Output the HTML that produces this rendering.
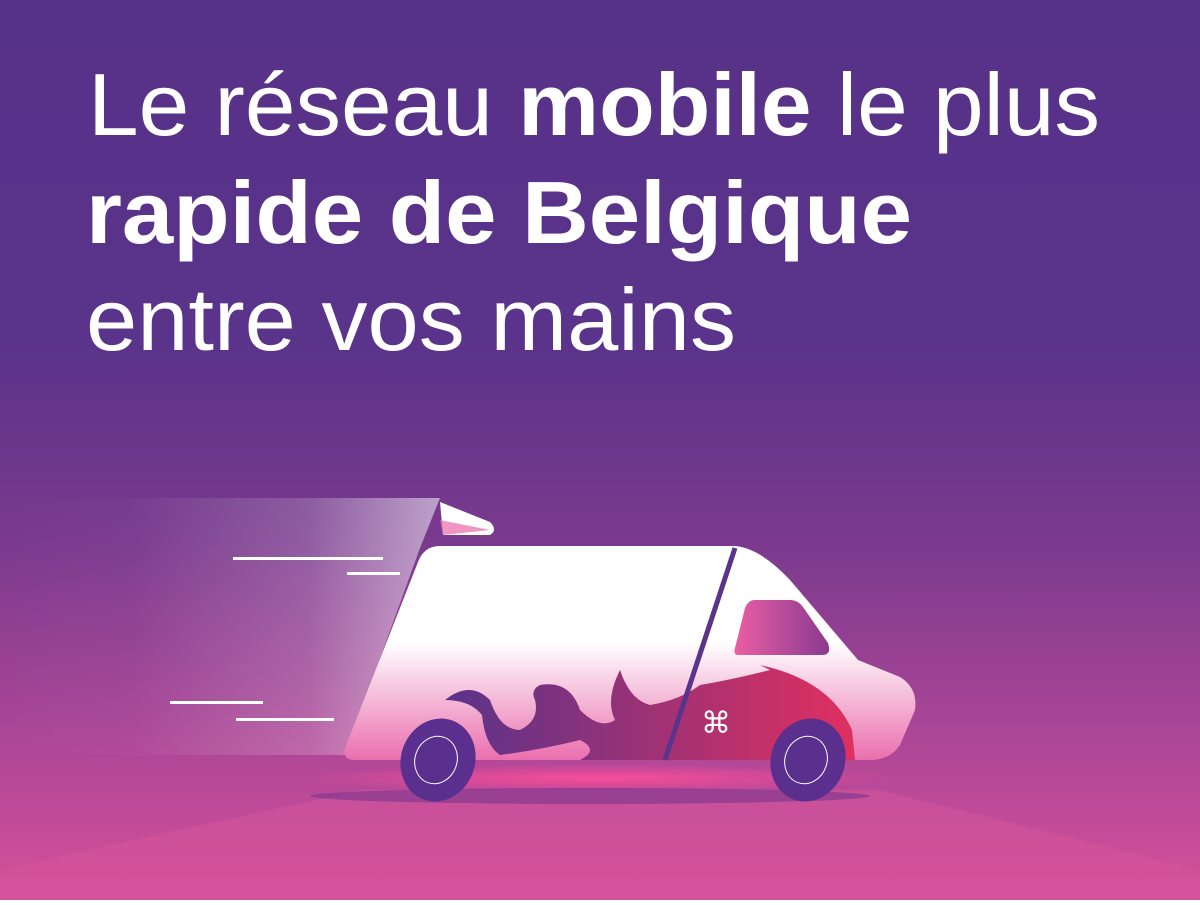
<!DOCTYPE html>
<html><head><meta charset="utf-8"><style>
html,body{margin:0;padding:0;}
body{width:1200px;height:900px;overflow:hidden;}
</style></head><body>
<svg width="1200" height="900" viewBox="0 0 1200 900" xmlns="http://www.w3.org/2000/svg">
<defs>
<linearGradient id="bg" x1="0" y1="0" x2="0" y2="1">
<stop offset="0" stop-color="#573289"/>
<stop offset="0.38" stop-color="#5a338a"/>
<stop offset="0.6" stop-color="#7a3a8e"/>
<stop offset="0.8" stop-color="#a84596"/>
<stop offset="1" stop-color="#d5509a"/>
</linearGradient>
<linearGradient id="blur" x1="0" y1="0" x2="1" y2="0">
<stop offset="0" stop-color="#ffffff" stop-opacity="0"/>
<stop offset="0.3" stop-color="#ffffff" stop-opacity="0.03"/>
<stop offset="0.7" stop-color="#ffffff" stop-opacity="0.25"/>
<stop offset="1" stop-color="#ffffff" stop-opacity="0.75"/>
</linearGradient>
<linearGradient id="body" x1="0" y1="0" x2="0" y2="1">
<stop offset="0" stop-color="#ffffff"/>
<stop offset="0.45" stop-color="#ffffff"/>
<stop offset="1" stop-color="#ea6fae"/>
</linearGradient>
<linearGradient id="flame" x1="0" y1="0" x2="1" y2="0">
<stop offset="0" stop-color="#5a338a"/>
<stop offset="1" stop-color="#e0305f"/>
</linearGradient>
<linearGradient id="win" x1="0" y1="0" x2="1" y2="0">
<stop offset="0" stop-color="#ea5ea4"/>
<stop offset="1" stop-color="#8a3a90"/>
</linearGradient>
<radialGradient id="glow" cx="0.5" cy="0.5" r="0.5">
<stop offset="0" stop-color="#ff4d9a" stop-opacity="0.9"/>
<stop offset="1" stop-color="#ff4d9a" stop-opacity="0"/>
</radialGradient>
</defs>
<rect width="1200" height="900" fill="url(#bg)"/>
<polygon points="0,870 360,790 880,790 1200,870 1200,900 0,900" fill="#d5559c" opacity="0.5"/>
<ellipse cx="600" cy="778" rx="300" ry="14" fill="url(#glow)"/>
<ellipse cx="590" cy="796" rx="280" ry="8" fill="#7a3590" opacity="0.6"/>
<polygon points="0,498 440,498 420,548 345,755 0,755" fill="url(#blur)" opacity="0.7"/>
<rect x="233" y="557" width="150" height="3" fill="#fff"/>
<rect x="347" y="572" width="53" height="3" fill="#fff"/>
<rect x="170" y="701" width="93" height="3" fill="#fff"/>
<rect x="236" y="718" width="98" height="3" fill="#fff"/>
<path d="M440,502 L490,522 Q498,530 490,535 L443,535 Z" fill="#fff"/>
<path d="M440,520 L490,530 L443,535 Z" fill="#e86aab" opacity="0.7"/>
<path d="M440,546 L735,546 Q760,548 790,580 L858,660 L900,677 Q918,688 915,710 L900,745 Q890,760 870,760 L355,760 Q342,760 345,748 L418,562 Q424,546 440,546 Z" fill="url(#body)"/>
<path d="M445,700 Q470,680 490,700 Q500,730 520,730 Q540,720 535,700 Q530,690 540,685 Q570,680 580,710 Q600,730 615,720 Q605,700 620,670 Q630,700 650,705 Q680,700 700,685 Q730,680 770,670 L760,665 Q830,680 852,730 L855,760 L580,760 Q600,750 580,740 Q540,750 500,755 Q485,745 482,715 Q470,700 445,700 Z" fill="url(#flame)"/>
<path d="M735,548 L665,760" stroke="#5a338a" stroke-width="5"/>
<path d="M755,600 L790,600 Q798,600 803,607 L828,643 Q832,655 822,655 L738,655 Q733,655 735,648 L745,608 Q748,600 755,600 Z" fill="url(#win)"/>
<text x="716" y="733" font-family="DejaVu Sans, sans-serif" font-size="30" fill="#fff" text-anchor="middle">⌘</text>
<ellipse cx="438" cy="760" rx="37" ry="42" transform="rotate(20 438 760)" fill="#5a2f8e"/>
<ellipse cx="436" cy="760" rx="21" ry="24" transform="rotate(20 436 760)" fill="none" stroke="#fff" stroke-width="1"/>
<ellipse cx="808" cy="760" rx="37" ry="42" transform="rotate(20 808 760)" fill="#5a2f8e"/>
<ellipse cx="806" cy="760" rx="21" ry="24" transform="rotate(20 806 760)" fill="none" stroke="#fff" stroke-width="1"/>
<g font-family="'Liberation Sans', sans-serif" fill="#fff" font-size="88">
<text x="88" y="135" textLength="1012" lengthAdjust="spacingAndGlyphs">Le réseau <tspan font-weight="bold">mobile</tspan> le plus</text>
<text x="86" y="243" textLength="826" lengthAdjust="spacingAndGlyphs" font-weight="bold">rapide de Belgique</text>
<text x="86" y="350" textLength="650" lengthAdjust="spacingAndGlyphs">entre vos mains</text>
</g>
</svg>
</body></html>
